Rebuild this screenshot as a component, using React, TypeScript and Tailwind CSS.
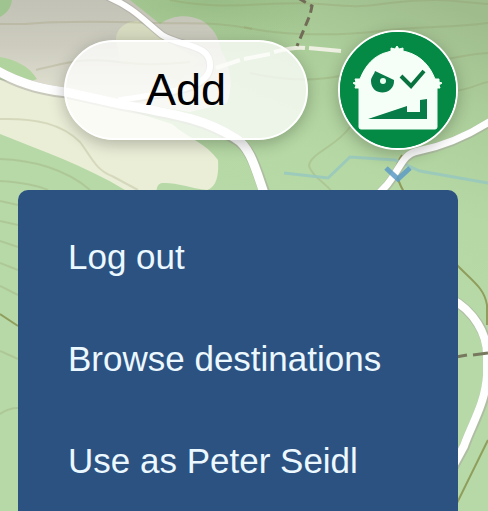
import React from "react";

const menuItems = ["Log out", "Browse destinations", "Use as Peter Seidl"];

const MapBackground: React.FC = () => (
  <svg
    className="absolute inset-0 h-full w-full"
    viewBox="0 0 488 511"
    preserveAspectRatio="xMidYMid slice"
    aria-hidden="true"
  >
    <defs>
      <linearGradient id="terrain" x1="0.9" y1="0" x2="0.7" y2="0.5">
        <stop offset="0" stopColor="#9fbc8d" />
        <stop offset="0.3" stopColor="#abcd99" />
        <stop offset="0.7" stopColor="#b5d8a4" />
        <stop offset="1" stopColor="#b7d9a7" />
      </linearGradient>
      <radialGradient id="slope" cx="0.5" cy="0" r="0.9">
        <stop offset="0" stopColor="#94b881" stopOpacity="0.8" />
        <stop offset="1" stopColor="#94b881" stopOpacity="0" />
      </radialGradient>
      <linearGradient id="rock" x1="0" y1="0" x2="0" y2="1">
        <stop offset="0" stopColor="#c2c2b6" />
        <stop offset="0.4" stopColor="#cccbbe" />
        <stop offset="0.8" stopColor="#dfdfd0" />
        <stop offset="1" stopColor="#e4e4d6" />
      </linearGradient>
    </defs>
    <rect width="488" height="511" fill="url(#terrain)" />
    <rect x="110" width="200" height="60" fill="url(#slope)" />

    {/* Rock and meadow areas */}
    <path
      d="M0 0H130C140 8 150 16 160 24C172 15 188 14 201 20C214 28 219 38 221 50C232 68 233 88 227 103L190 112L0 82Z"
      fill="url(#rock)"
    />
    <path d="M0 0H12C11 8 7 13 0 17Z" fill="#a0c48f" />
    <path d="M0 57C14 59 29 66 37 79L24 84L0 80Z" fill="#b1d49e" />
    <path d="M116 40C116 30 124 21 138 21L165 40L200 60L180 80L120 62Z" fill="#d6dabf" />
    <path
      d="M0 80L70 92L172 124C188 138 207 144 218 160C219 174 217 187 207 190C190 188 175 182 162 183C157 184 155 190 158 196L125 190C86 166 40 150 0 134Z"
      fill="#eaeed7"
    />

    {/* Contour lines */}
    <g fill="none" stroke="#8c8c5c" strokeOpacity="0.22" strokeWidth="2">
      <path d="M0 24H26C70 20 120 22 158 23S220 22 252 29" />
      <path d="M36 70C60 64 80 58 110 61S150 66 190 62" />
      <path d="M0 119C36 118 62 124 80 142C92 158 96 170 112 176L138 190" />
      <path d="M0 159C32 160 66 169 90 190" />
      <path d="M0 181C16 182 34 184 48 190" />
      <path d="M170 0C230 12 270 0 320 4S360 6 400 2S450 1 488 4" />
      <path d="M244 27C280 36 340 36 380 31S450 28 488 23" />
      <path d="M250 73C290 82 320 80 340 76" />
      <path d="M440 60C460 57 470 54 488 53" />
      <path d="M456 91C470 89 478 84 488 82" />
      <path d="M350 127C336 147 310 153 309 166C313 178 325 182 332 192" />
      <path d="M0 201L18 205M0 221L18 225M0 241L18 247M0 263L18 270M0 286L18 295M0 351L18 359M0 414C7 409 12 408 18 408" />
    </g>
    <path d="M0 314L18 326" stroke="#8f9e5c" strokeWidth="2" />
    <path d="M402 155C392 168 398 182 404 192" fill="none" stroke="#8f9b5b" strokeWidth="2" />
    <path d="M456 264C471 280 484 287 487 305V325M488 440L456 505" fill="none" stroke="#8f9e5c" strokeWidth="2" />

    {/* Stream */}
    <path
      d="M284 173L328 178L350 157L395 160L420 171L488 183"
      fill="none"
      stroke="#98c8be"
      strokeOpacity="0.85"
      strokeWidth="3"
    />

    {/* Roads, casing first */}
    <g fill="none" strokeLinecap="round" strokeLinejoin="round">
      <g stroke="#a7a3a0" strokeOpacity="0.5">
        <path d="M-4 71C25 88 52 91 66 93L120 105C180 116 205 120 235 139C252 148 257 172 266 196" strokeWidth="11" />
        <path d="M106 -4C135 8 145 22 162 35C180 47 212 43 210 68C208 88 180 92 120 101" strokeWidth="8" />
        <path d="M370 201C400 181 398 155 418 152C443 147 466 138 492 121" strokeWidth="9" />
        <path d="M450 298C475 312 488 335 488 355V375C486 405 472 425 465 446L452 470" strokeWidth="10" />
      </g>
      <g stroke="#fefefe">
        <path d="M-4 70C25 87 52 90 66 92L120 104C180 115 205 119 235 138C251 147 256 171 265 196" strokeWidth="9" />
        <path d="M106 -4C135 8 145 22 162 35C180 47 212 43 210 67C208 87 180 91 120 100" strokeWidth="6" />
        <path d="M370 200C400 180 398 154 418 151C443 146 466 137 492 120" strokeWidth="7" />
        <path d="M450 298C475 311 487 335 487 355V375C485 405 471 425 464 446L451 470" strokeWidth="8" />
      </g>
    </g>
    <path d="M216 68L240 60M244 59L270 54M274 52C286 49 296 47 305 48M309 48L341 51" fill="none" stroke="#eef0e2" strokeWidth="4" />
    <path d="M298 -2L312 6L310 15L297 46" fill="none" stroke="#716b57" strokeWidth="3" strokeDasharray="9 5" />
    <path d="M456 357L467 355M473 355L488 353" stroke="#77795f" strokeWidth="3" />
  </svg>
);

const AvatarFace: React.FC = () => (
  <svg viewBox="2 2 116 116" className="h-full w-full" aria-hidden="true">
    <rect width="120" height="120" fill="#058a46" />
    <path
      d="M50 22L53 21L53 18L57 19L59 16L61 19L65 18L65 21L69 22C83 26 92 36 97 49L101 49L101 52L104 53L101 55L102 58L99 58V97Q99 99 97 99H23Q21 99 21 97V58L17 58L18 55L15 53L18 52L17 49L22 49C27 36 36 25 50 22Z"
      fill="#f5fff8"
      stroke="#f5fff8"
      strokeWidth="1"
      strokeLinejoin="round"
    />
    <path d="M37 41L56 50C57 66 33 67 33 51C33 47 36 45 37 41Z" fill="#087c48" />
    <circle cx="45" cy="51" r="3" fill="#e9fff2" />
    <path d="M63 46L73 56L86 41" fill="none" stroke="#08733f" strokeWidth="4" />
    <path d="M30 89L69 76V82H82V70L89 69V89Z" fill="#087c48" />
  </svg>
);

const App: React.FC = () => {
  return (
    <main
      className="
        relative flex h-screen flex-col overflow-hidden
        bg-[#b5d8a4] font-['Liberation_Sans',Arial,sans-serif]
      "
    >
      <MapBackground />

      <header className="relative flex items-center justify-end gap-[30px] px-[30px] pt-[30px]">
        <button
          className="
            h-[100px] w-[244px] rounded-full border-2 border-white
            bg-white/75 text-[45px] text-black
            shadow-[0_4px_16px_rgba(0,0,0,0.25)]
          "
        >
          Add
        </button>
        <button
          className="
            h-[120px] w-[120px] overflow-hidden rounded-full border-2 border-white
            bg-[#058a46] shadow-[0_4px_16px_rgba(0,0,0,0.25)]
          "
          aria-label="Account"
        >
          <AvatarFace />
        </button>
      </header>

      {/* Arrow pointing from the avatar to the menu */}
      <div className="relative flex h-10 shrink-0 justify-end px-[30px]">
        <div className="flex w-[120px] justify-center pt-4">
          <svg width="28" height="18" viewBox="0 0 28 18" aria-hidden="true">
            <path d="M2 2L14 13L26 2" fill="none" stroke="#5d9bc6" strokeOpacity="0.85" strokeWidth="5" />
          </svg>
        </div>
      </div>

      <nav className="relative mr-[30px] ml-[18px] flex-1 rounded-t-[10px] bg-[#2c5282] pt-4">
        <ul>
          {menuItems.map((item) => (
            <li key={item}>
              <a href="#" className="flex h-[102px] items-center px-[50px] text-[35px] text-[#ebf8ff]">
                {item}
              </a>
            </li>
          ))}
        </ul>
      </nav>
    </main>
  );
};

export default App;
